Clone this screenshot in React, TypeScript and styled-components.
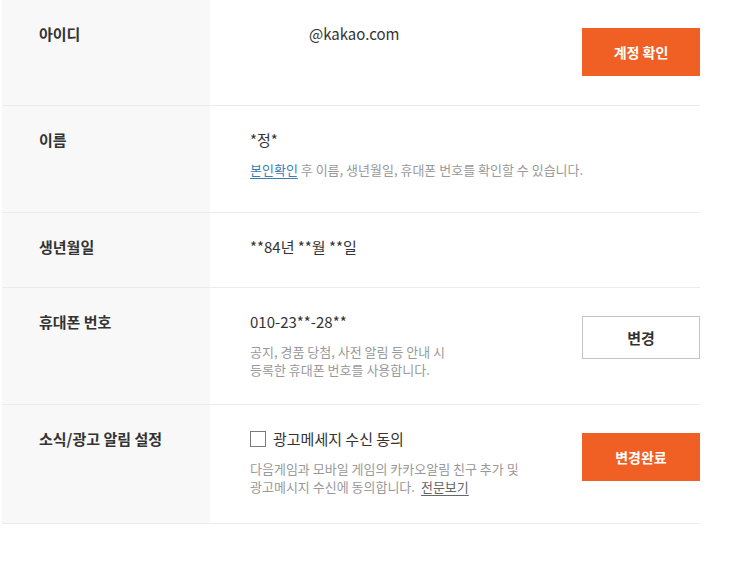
import React from "react";
import styled, { createGlobalStyle } from "styled-components";

const Global = createGlobalStyle`
  html, body { margin: 0; padding: 0; background: #fff; }
  body {
    font-family: "Noto Sans CJK KR", "Noto Sans", sans-serif;
    color: #333;
    -webkit-font-smoothing: antialiased;
  }
`;

const Wrap = styled.div`
  padding-left: 2px;
  width: 698px;
`;

const Table = styled.div`
  display: flex;
  flex-direction: column;
`;

const Row = styled.div<{ $pb: number }>`
  display: grid;
  grid-template-columns: 208px minmax(0, 1fr) 118px;
  border-bottom: 1px solid #ebebeb;
  & > * {
    padding-bottom: ${(p) => p.$pb}px;
  }
`;

const Label = styled.div`
  background: #f8f8f8;
  padding-top: 24px;
  padding-left: 37px;
  font-size: 15px;
  line-height: 20px;
  font-weight: 700;
  color: #333;
`;

const Content = styled.div`
  padding-top: 24px;
  padding-left: 40px;
  display: flex;
  flex-direction: column;
  gap: 11px;
`;

const Value = styled.div`
  font-size: 15px;
  line-height: 20px;
  color: #333;
`;

const IdMask = styled.span`
  display: inline-block;
  width: 59px;
`;

const Desc = styled.p`
  margin: 0;
  font-size: 13px;
  line-height: 18px;
  color: #999;
  white-space: nowrap;
`;

const Link = styled.a<{ $tone?: "blue" | "gray" }>`
  color: ${(p) => (p.$tone === "gray" ? "#666" : "#3b7bb0")};
  text-decoration: underline;
  text-underline-offset: 3px;
  margin-left: ${(p) => (p.$tone === "gray" ? "6px" : "0")};
`;

const Action = styled.div`
  padding-top: 28px;
`;

const Button = styled.button<{ $variant?: "primary" | "outline" }>`
  display: flex;
  align-items: center;
  justify-content: center;
  width: 118px;
  height: ${(p) => (p.$variant === "outline" ? "43px" : "48px")};
  box-sizing: border-box;
  font-family: inherit;
  font-size: ${(p) => (p.$variant === "outline" ? "15px" : "14px")};
  font-weight: 700;
  cursor: pointer;
  border: 1px solid ${(p) => (p.$variant === "outline" ? "#c4c4c4" : "#f05f23")};
  background: ${(p) => (p.$variant === "outline" ? "#fff" : "#f05f23")};
  color: ${(p) => (p.$variant === "outline" ? "#333" : "#fff")};
  padding: 0;
`;

const CheckLabel = styled.label`
  display: flex;
  align-items: center;
  gap: 7px;
  font-size: 15px;
  line-height: 20px;
  color: #333;
  cursor: pointer;
`;

const Box = styled.span`
  width: 16px;
  height: 16px;
  box-sizing: border-box;
  border: 1px solid #7a7a7a;
  background: #fff;
  display: inline-block;
`;

export default function App() {
  return (
    <>
      <Global />
      <Wrap>
        <Table>
          <Row $pb={29}>
            <Label>아이디</Label>
            <Content>
              <Value>
                <IdMask />@kakao.com
              </Value>
            </Content>
            <Action>
              <Button $variant="primary">계정 확인</Button>
            </Action>
          </Row>
          <Row $pb={33}>
            <Label>이름</Label>
            <Content>
              <Value>*정*</Value>
              <Desc>
                <Link $tone="blue">본인확인</Link> 후 이름, 생년월일, 휴대폰 번호를 확인할 수 있습니다.
              </Desc>
            </Content>
            <div />
          </Row>
          <Row $pb={30}>
            <Label>생년월일</Label>
            <Content>
              <Value>**84년 **월 **일</Value>
            </Content>
            <div />
          </Row>
          <Row $pb={25}>
            <Label>휴대폰 번호</Label>
            <Content>
              <Value>010-23**-28**</Value>
              <Desc>
                공지, 경품 당첨, 사전 알림 등 안내 시
                <br />
                등록한 휴대폰 번호를 사용합니다.
              </Desc>
            </Content>
            <Action>
              <Button $variant="outline">변경</Button>
            </Action>
          </Row>
          <Row $pb={27}>
            <Label>소식/광고 알림 설정</Label>
            <Content>
              <CheckLabel>
                <Box />
                광고메세지 수신 동의
              </CheckLabel>
              <Desc>
                다음게임과 모바일 게임의 카카오알림 친구 추가 및
                <br />
                광고메시지 수신에 동의합니다.
                <Link $tone="gray">전문보기</Link>
              </Desc>
            </Content>
            <Action>
              <Button $variant="primary">변경완료</Button>
            </Action>
          </Row>
        </Table>
      </Wrap>
    </>
  );
}
